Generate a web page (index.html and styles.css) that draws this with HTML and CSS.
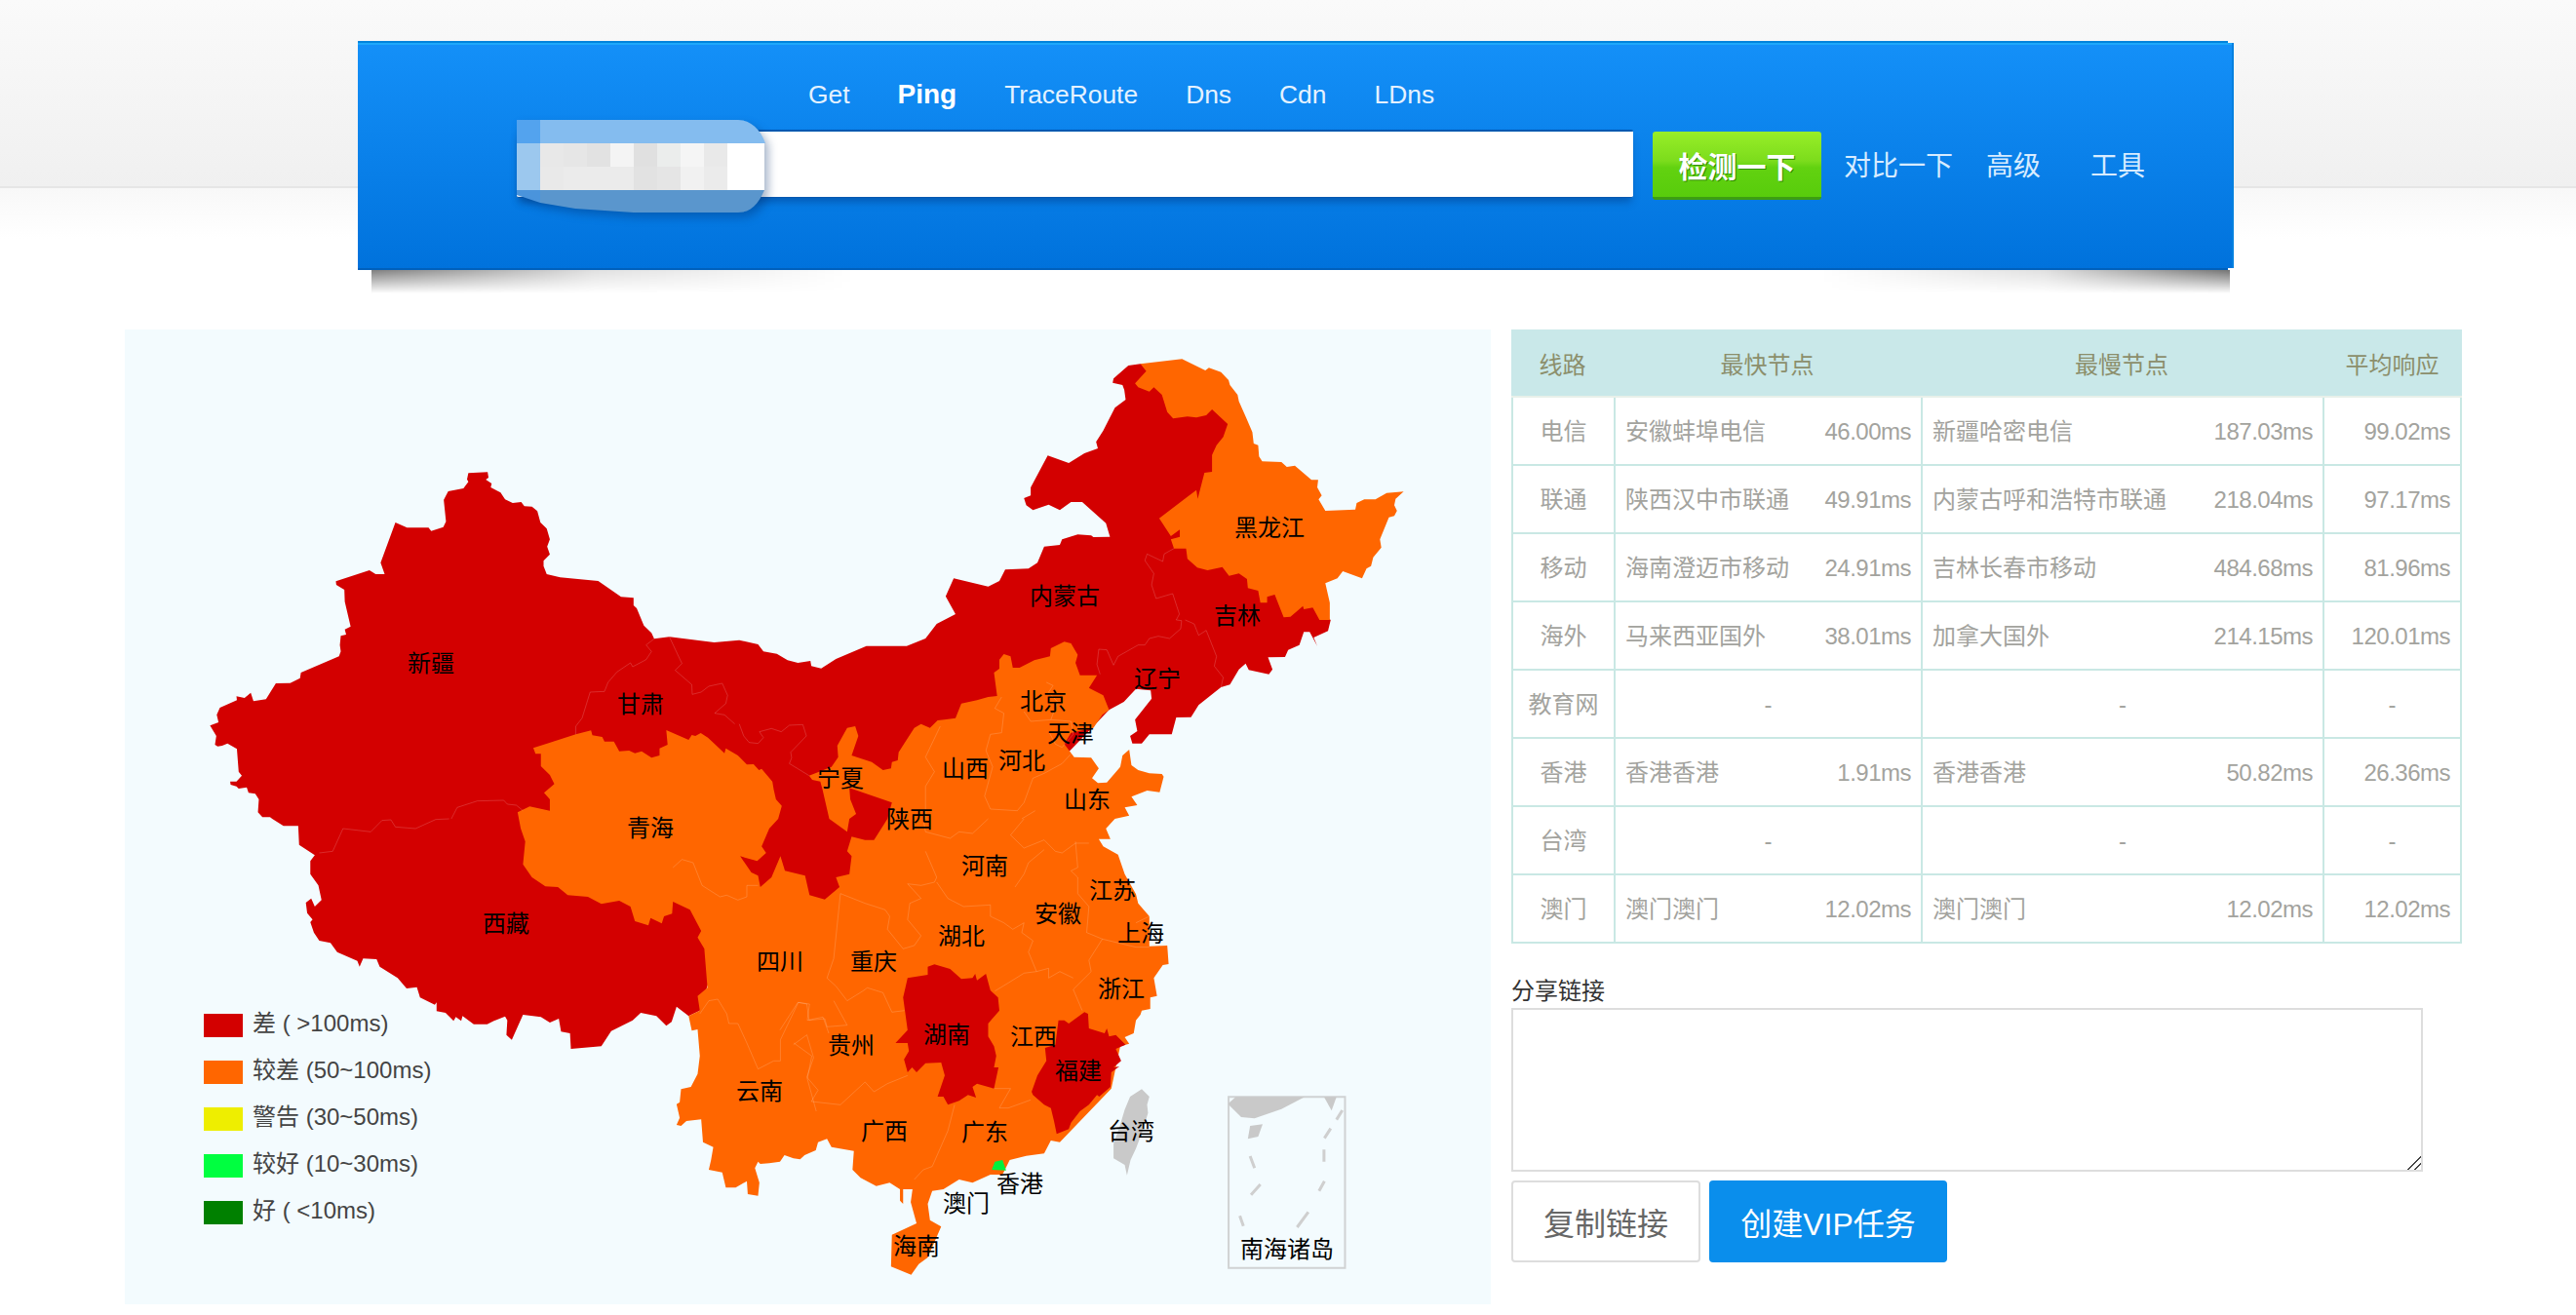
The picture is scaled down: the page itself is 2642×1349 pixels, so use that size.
FILE: index.html
```html
<!DOCTYPE html>
<html lang="zh-CN">
<head>
<meta charset="utf-8">
<title>Ping 检测</title>
<link rel="stylesheet" href="styles.css">
</head>
<body>
<div class="page">
  <header class="bar">
    <nav class="nav">
      <a>Get</a><a class="nav-on">Ping</a><a>TraceRoute</a><a>Dns</a><a>Cdn</a><a>LDns</a>
    </nav>
    <div class="search">
      <div class="field"></div>
      <svg class="patch" width="256" height="97" viewBox="530 122 256 97">
        <path fill="#84bcef" d="M554 122H757C770 122 780 132 785 146H554Z"/>
        <rect x="530" y="122" width="24" height="24" fill="#53a3ee"/>
        <rect x="530" y="146" width="24" height="48" fill="#9cc8ee"/>
        <rect x="554" y="146" width="24" height="24" fill="#e8e8e8"/>
        <rect x="578" y="146" width="24" height="24" fill="#e6e6e6"/>
        <rect x="602" y="146" width="24" height="24" fill="#e2e2e2"/>
        <rect x="626" y="146" width="24" height="24" fill="#f4f4f4"/>
        <rect x="650" y="146" width="24" height="24" fill="#e0e0e0"/>
        <rect x="674" y="146" width="24" height="24" fill="#ebedec"/>
        <rect x="698" y="146" width="24" height="24" fill="#f5f5f5"/>
        <rect x="722" y="146" width="24" height="24" fill="#e9e9e9"/>
        <rect x="554" y="170" width="24" height="24" fill="#e9e9e9"/>
        <rect x="578" y="170" width="48" height="24" fill="#ebebeb"/>
        <rect x="626" y="170" width="24" height="24" fill="#ebebeb"/>
        <rect x="650" y="170" width="24" height="24" fill="#e2e2e2"/>
        <rect x="674" y="170" width="24" height="24" fill="#e5e5e5"/>
        <rect x="698" y="170" width="24" height="24" fill="#f1f1f1"/>
        <rect x="722" y="170" width="24" height="24" fill="#ebebeb"/>
        <rect x="746" y="146" width="38" height="48" fill="#ffffff"/>
        <path fill="#4a94dc" d="M530 194H554V207L530 199Z"/>
        <path fill="#5a96cd" d="M554 194H784C778 208 770 217 757 217H650L590 213L554 207Z"/>
      </svg>
      <button class="go">检测一下</button>
      <a class="tool tool-compare">对比一下</a>
      <a class="tool tool-adv">高级</a>
      <a class="tool tool-kit">工具</a>
    </div>
  </header>

  <main class="main">
    <section class="mapbox">
      <svg class="map" width="1401" height="1000" viewBox="128 338 1401 1000">
        <g transform="translate(130 340) scale(.4592 .33333)">
          <polygon class="red" points="763,436 806,433 808,450 802,456 815,468 813,480 835,496 845,517 862,528 881,525 888,538 905,539 917,553 924,588 938,607 945,640 939,662 945,686 931,706 931,722 938,747 968,757 1053,768 1104,817 1132,820 1132,843 1139,852 1155,905 1172,928 1178,946 1212,940 1312,957 1368,950 1410,963 1422,985 1452,992 1476,1012 1499,1020 1527,1014 1529,1030 1551,1037 1584,1008 1652,968 1742,968 1784,945 1809,900 1851,870 1829,815 1847,760 1924,785 1949,768 1962,733 2014,730 2034,712 2049,662 2084,657 2089,640 2124,625 2154,628 2159,633 2196,632 2187,590 2134,525 2109,525 2084,550 2059,533 2024,550 2009,535 2004,513 2019,505 2019,480 2057,382 2104,405 2139,375 2169,360 2165,340 2181,305 2207,235 2231,210 2228,180 2224,165 2202,158 2204,145 2237,105 2264,100 2350,150 2450,230 2500,300 2520,500 2600,800 2689,888 2683,922 2651,942 2659,968 2642,925 2629,925 2619,965 2594,980 2587,1002 2549,1003 2559,1040 2551,1055 2506,1042 2499,1022 2484,1040 2464,1087 2444,1095 2394,1150 2377,1187 2344,1188 2334,1240 2284,1240 2267,1268 2246,1268 2241,1245 2257,1230 2252,1195 2289,1130 2287,1105 2254,1100 2227,1140 2194,1165 2100,1300 1800,1600 1300,2000 1280,2090 1255,2107 1228,2078 1217,2125 1205,2137 1183,2107 1148,2097 1130,2120 1082,2153 1060,2200 992,2208 990,2160 970,2155 965,2115 945,2127 925,2110 885,2103 860,2180 848,2165 850,2120 845,2108 820,2122 805,2132 775,2132 750,2107 747,2122 735,2110 730,2122 712,2097 692,2092 692,2065 688,2072 655,2050 648,2018 625,2022 605,1990 565,1955 558,1932 528,1930 520,1955 515,1937 470,1910 455,1882 430,1875 418,1850 410,1818 415,1810 403,1790 400,1758 412,1745 420,1770 435,1750 428,1705 410,1670 410,1630 420,1612 385,1580 383,1522 350,1522 325,1500 320,1495 303,1495 293,1480 295,1440 287,1423 272,1420 268,1403 250,1407 245,1400 232,1395 231,1385 245,1385 257,1367 250,1355 246,1285 225,1268 213,1275 203,1277 197,1272 200,1245 186,1213 205,1203 201,1180 208,1158 246,1135 245,1123 263,1128 277,1112 283,1138 311,1132 333,1083 365,1082 387,1067 389,1050 474,1000 478,985 476,965 478,937 490,933 487,917 500,908 487,832 486,795 468,780 467,769 542,735 556,747 576,747 567,712 600,588 626,604 674,604 680,614 707,602 713,585 708,518 718,492 752,483 763,463 760,455"/>

          <polygon class="orange" points="908,1282 1003,1240 1037,1228 1040,1243 1062,1248 1067,1262 1088,1262 1100,1292 1122,1290 1135,1298 1150,1292 1172,1312 1190,1305 1190,1283 1208,1272 1205,1227 1255,1257 1262,1242 1270,1245 1282,1236 1298,1250 1335,1298 1338,1283 1365,1305 1385,1333 1400,1332 1412,1350 1418,1346 1442,1385 1524,1385 1524,1367 1574,1340 1589,1310 1587,1275 1609,1220 1627,1215 1634,1245 1619,1305 1664,1325 1689,1350 1707,1345 1709,1325 1722,1320 1724,1295 1759,1220 1774,1208 1794,1220 1811,1197 1826,1195 1851,1190 1864,1145 1899,1135 1924,1125 1944,1122 1937,1050 1949,1038 1949,1010 1959,993 1974,1000 1979,1035 1994,1035 2027,1012 2062,1000 2064,975 2094,955 2109,960 2124,995 2119,1020 2129,1058 2167,1058 2149,1097 2181,1120 2194,1165 2179,1180 2159,1220 2109,1235 2094,1270 2116,1310 2154,1312 2171,1345 2156,1375 2169,1390 2189,1388 2219,1340 2224,1305 2239,1287 2244,1335 2259,1350 2284,1360 2312,1362 2316,1370 2307,1418 2279,1413 2244,1432 2257,1458 2229,1465 2239,1490 2207,1500 2187,1530 2197,1562 2171,1562 2181,1585 2214,1610 2229,1670 2254,1732 2259,1760 2284,1800 2284,1892 2324,1890 2327,1947 2314,1950 2294,1990 2301,2045 2286,2050 2286,2085 2267,2090 2264,2103 2254,2120 2249,2160 2229,2172 2239,2192 2219,2200 2199,2330 2084,2495 2064,2490 2049,2530 2009,2537 1972,2550 1956,2595 1929,2595 1889,2620 1859,2610 1824,2640 1799,2645 1789,2685 1794,2735 1819,2755 1789,2850 1769,2870 1752,2903 1707,2878 1709,2780 1764,2745 1751,2680 1755,2640 1734,2640 1734,2685 1727,2675 1727,2640 1704,2620 1674,2630 1639,2605 1621,2580 1624,2522 1574,2510 1564,2485 1544,2495 1539,2520 1514,2535 1504,2548 1489,2545 1469,2535 1459,2555 1435,2560 1415,2562 1410,2555 1403,2575 1413,2620 1410,2660 1387,2655 1385,2615 1360,2635 1338,2635 1330,2588 1300,2580 1305,2550 1310,2510 1287,2495 1283,2425 1250,2430 1238,2445 1228,2442 1235,2420 1228,2378 1235,2372 1238,2332 1260,2325 1275,2285 1280,2230 1275,2148 1262,2152 1255,2107 1280,2090 1275,2045 1297,2020 1290,1900 1275,1865 1283,1845 1258,1780 1220,1755 1218,1792 1200,1800 1195,1822 1170,1805 1165,1828 1135,1815 1125,1770 1100,1752 1060,1762 1030,1740 985,1735 963,1710 935,1708 905,1680 885,1640 890,1570 880,1530 873,1480 900,1462 945,1475 945,1440 932,1420 955,1393 945,1365 925,1338 925,1300 913,1300"/>

          <polygon class="red" points="1430,1340 1442,1385 1445,1410 1450,1440 1463,1460 1455,1500 1435,1530 1418,1585 1428,1605 1408,1630 1370,1615 1395,1665 1410,1675 1415,1710 1440,1680 1460,1615 1470,1660 1515,1675 1525,1735 1559,1748 1592,1710 1584,1680 1614,1670 1619,1615 1609,1600 1619,1555 1649,1565 1669,1565 1699,1500 1709,1450 1614,1405 1616,1440 1629,1485 1614,1500 1609,1540 1569,1500 1554,1410 1549,1385 1531,1380 1524,1367"/>

          <g transform="translate(1459 0)">
            <polygon class="orange" points="805,100 898,85 950,120 958,112 985,125 1002,150 1005,165 1022,195 1025,215 1040,262 1055,310 1058,345 1068,350 1070,385 1077,400 1120,402 1132,417 1150,413 1187,457 1202,457 1200,480 1210,505 1203,517 1218,552 1285,548 1288,528 1305,517 1330,517 1355,497 1393,493 1375,515 1372,535 1378,552 1372,568 1360,572 1340,640 1343,665 1325,695 1320,722 1310,730 1300,760 1257,738 1245,760 1218,775 1228,835 1228,888 1205,888 1190,850 1170,855 1168,845 1140,878 1125,880 1105,810 1088,817 1088,835 1073,835 1068,798 1045,790 1043,762 1025,745 1003,752 988,725 955,735 932,727 910,700 907,668 880,668 873,640 893,632 893,610 873,630 847,575 930,488 933,515 948,435 965,432 965,380 975,350 990,325 1000,285 965,240 952,258 930,265 910,262 878,268 865,248 853,195 835,172 825,185 800,172 793,160 818,122"/>
          </g>

          <g transform="translate(1459 1500)">
            <polygon class="red" points="345,448 380,462 405,493 430,490 436,477 440,497 460,477 470,528 487,550 490,590 465,630 465,670 478,700 483,730 478,765 488,765 478,830 465,825 440,815 430,825 438,858 420,850 400,868 375,880 365,855 352,855 368,790 360,750 325,752 305,780 295,765 285,780 277,740 288,715 285,690 258,690 285,650 275,550 285,490 330,480 330,455"/>
            <polygon class="red" points="680,595 688,600 690,645 725,660 730,645 735,670 750,665 772,695 750,708 762,745 745,765 758,762 740,780 738,825 713,855 708,850 690,880 670,900 650,935 645,955 618,970 612,930 605,890 590,880 565,850 562,840 575,790 595,745 592,705 615,695 622,620 635,620 645,630"/>
            <polygon class="grey" points="808,832 825,855 820,880 822,905 810,960 795,1015 783,1050 775,1097 770,1065 745,1045 745,1000 758,950 770,895 782,855"/>
            <polygon class="hk" points="473,1080 480,1055 497,1050 505,1082"/>

            <rect class="inset" x="1002" y="856" width="260" height="526"/>
            <polygon class="grey" points="1002,875 1018,856 1172,856 1120,893 1060,922 1030,918 1002,880"/>
            <polygon class="grey" points="1215,856 1243,856 1232,898"/>
            <polygon class="grey" points="1045,985 1050,945 1078,940 1068,978"/>
            <path class="dash" d="M1256 897L1243 926M1230 953L1216 983M1215 1018V1055M1050 1038L1060 1075M1216 1115L1204 1145M1073 1125L1052 1157M1180 1210L1155 1257M1027 1222L1035 1253"/>

            <path class="edge" d="M320 0L325 40L380 60L400 40L430 45L465 0M545 0L515 50L545 90L590 65L615 100L630 105L660 75L690 75M325 100L350 180L345 195L315 205L285 200L315 245L290 260L285 310L315 360L300 390L275 400L240 340L245 300L235 280L190 260L135 230M350 195L375 245L410 270L470 265L470 300L500 320L520 340L545 320L540 350L565 375L555 410L573 470L545 475L510 505L480 530M525 210L545 170L555 135L590 95M660 70L665 150L650 160L665 180L665 230L690 270L685 350L720 370L690 435L695 470L655 525L675 590M720 370L795 395L825 395M795 320L825 300M573 470L600 460L600 490L625 470L655 490M135 230L120 430L105 490L125 515L150 560L185 530L195 520L230 535L250 595L278 590M120 560L150 635L105 640L100 615L65 620L60 570L40 565L0 650M30 695L60 665L75 735L60 795L85 835L70 870L135 880L190 810L210 840L240 815L285 790M390 880L375 960L340 1070L320 1080L300 1110M478 830L515 830L490 890L510 890L560 865"/>
          </g>

          <g transform="translate(1459 0)">
            <path class="edge" d="M595 1080L610 1090L600 1110L620 1140L605 1195L650 1200L655 1240L630 1280L615 1270L600 1230M545 1170L560 1200L605 1195M495 1125L480 1160L500 1175L495 1235L470 1240L460 1290L475 1340L457 1430L470 1470L530 1475L545 1450L565 1375L590 1360L630 1330L650 1300M358 1215L325 1310L345 1355L325 1400L325 1500M540 1500L570 1475"/>
            <path class="edge" d="M880 668L858 685L855 708L835 695L820 685L815 705L835 745L830 780L840 822L877 807L892 870L885 888L897 890L895 915L870 945L845 938L825 945L815 965L800 965L755 1000L745 1027L730 980L712 978L708 1025L715 1055M905 888L925 900L935 935L952 920L975 1000L970 1030L990 1065L985 1095"/>
          </g>

          <path class="edge" d="M1178 946L1160 965L1172 985L1160 1010L1130 1032L1125 1020L1095 1048L1075 1080L1067 1108L1035 1110L1017 1190L1003 1215L1003 1240M1212 940L1240 1022L1225 1043L1262 1087L1263 1117L1283 1110L1300 1092L1330 1083L1342 1120L1338 1145L1313 1175L1335 1180L1358 1208M1368 1208L1378 1245L1390 1265L1410 1268L1422 1250L1413 1232L1440 1222L1462 1232L1480 1212L1510 1210L1518 1245L1483 1295L1485 1312L1480 1330L1524 1367M725 1500L738 1465L783 1445L842 1443L850 1455L870 1458L885 1475M430 1605L460 1600L483 1530L545 1540L570 1505L590 1503L600 1525L645 1530L690 1502L720 1500"/>
          <path class="edge" d="M1220 1650L1240 1625L1265 1635L1285 1705L1325 1740L1340 1735L1365 1750L1385 1740L1385 1705L1410 1705M1280 2100L1300 2060L1320 2055L1340 2100L1345 2130L1365 2130L1385 2190L1410 2270L1445 2245L1460 2245L1460 2180L1500 2065L1525 2070L1520 2120L1555 2110L1568 2160M1490 2190L1530 2230L1520 2300L1540 2400"/>
        </g>

        <text class="lbl" x="442" y="680">新疆</text>
        <text class="lbl" x="657" y="722">甘肃</text>
        <text class="lbl" x="667" y="849">青海</text>
        <text class="lbl" x="519" y="947">西藏</text>
        <text class="lbl" x="800" y="986">四川</text>
        <text class="lbl" x="779" y="1119">云南</text>
        <text class="lbl" x="1092" y="611">内蒙古</text>
        <text class="lbl" x="1302" y="541">黑龙江</text>
        <text class="lbl" x="1269" y="631">吉林</text>
        <text class="lbl" x="1187" y="696">辽宁</text>
        <text class="lbl" x="1070" y="719">北京</text>
        <text class="lbl" x="1098" y="752">天津</text>
        <text class="lbl" x="1048" y="780">河北</text>
        <text class="lbl" x="990" y="788">山西</text>
        <text class="lbl" x="862" y="798">宁夏</text>
        <text class="lbl" x="1115" y="820">山东</text>
        <text class="lbl" x="933" y="840">陕西</text>
        <text class="lbl" x="1010" y="888">河南</text>
        <text class="lbl" x="1141" y="913">江苏</text>
        <text class="lbl" x="1085" y="937">安徽</text>
        <text class="lbl" x="1170" y="957">上海</text>
        <text class="lbl" x="986" y="960">湖北</text>
        <text class="lbl" x="896" y="986">重庆</text>
        <text class="lbl" x="1150" y="1014">浙江</text>
        <text class="lbl" x="971" y="1061">湖南</text>
        <text class="lbl" x="1060" y="1063">江西</text>
        <text class="lbl" x="873" y="1072">贵州</text>
        <text class="lbl" x="1106" y="1098">福建</text>
        <text class="lbl" x="907" y="1160">广西</text>
        <text class="lbl" x="1010" y="1161">广东</text>
        <text class="lbl" x="1160" y="1160">台湾</text>
        <text class="lbl" x="1046" y="1214">香港</text>
        <text class="lbl" x="991" y="1234">澳门</text>
        <text class="lbl" x="940" y="1278">海南</text>
        <text class="lbl" x="1320" y="1281">南海诸岛</text>
      </svg>
      <ul class="legend">
        <li><i class="sw sw-bad"></i>差 ( &gt;100ms)</li>
        <li><i class="sw sw-poor"></i>较差 (50~100ms)</li>
        <li><i class="sw sw-warn"></i>警告 (30~50ms)</li>
        <li><i class="sw sw-fine"></i>较好 (10~30ms)</li>
        <li><i class="sw sw-good"></i>好 ( &lt;10ms)</li>
      </ul>
    </section>

    <section class="side">
      <table class="stats">
        <colgroup><col class="c1"><col class="c2"><col class="c3"><col class="c4"></colgroup>
        <thead>
          <tr><th>线路</th><th>最快节点</th><th>最慢节点</th><th>平均响应</th></tr>
        </thead>
        <tbody>
          <tr><td class="line">电信</td><td><div class="node"><span>安徽蚌埠电信</span><span class="num">46.00ms</span></div></td><td><div class="node"><span>新疆哈密电信</span><span class="num">187.03ms</span></div></td><td class="avg"><span class="num">99.02ms</span></td></tr>
          <tr><td class="line">联通</td><td><div class="node"><span>陕西汉中市联通</span><span class="num">49.91ms</span></div></td><td><div class="node"><span>内蒙古呼和浩特市联通</span><span class="num">218.04ms</span></div></td><td class="avg"><span class="num">97.17ms</span></td></tr>
          <tr><td class="line">移动</td><td><div class="node"><span>海南澄迈市移动</span><span class="num">24.91ms</span></div></td><td><div class="node"><span>吉林长春市移动</span><span class="num">484.68ms</span></div></td><td class="avg"><span class="num">81.96ms</span></td></tr>
          <tr><td class="line">海外</td><td><div class="node"><span>马来西亚国外</span><span class="num">38.01ms</span></div></td><td><div class="node"><span>加拿大国外</span><span class="num">214.15ms</span></div></td><td class="avg"><span class="num">120.01ms</span></td></tr>
          <tr><td class="line">教育网</td><td class="none">-</td><td class="none">-</td><td class="none">-</td></tr>
          <tr><td class="line">香港</td><td><div class="node"><span>香港香港</span><span class="num">1.91ms</span></div></td><td><div class="node"><span>香港香港</span><span class="num">50.82ms</span></div></td><td class="avg"><span class="num">26.36ms</span></td></tr>
          <tr><td class="line">台湾</td><td class="none">-</td><td class="none">-</td><td class="none">-</td></tr>
          <tr><td class="line">澳门</td><td><div class="node"><span>澳门澳门</span><span class="num">12.02ms</span></div></td><td><div class="node"><span>澳门澳门</span><span class="num">12.02ms</span></div></td><td class="avg"><span class="num">12.02ms</span></td></tr>
        </tbody>
      </table>
      <label class="share-label" for="share">分享链接</label>
      <textarea class="share" id="share"></textarea>
      <div class="actions">
        <button class="btn btn-copy">复制链接</button>
        <button class="btn btn-vip">创建VIP任务</button>
      </div>
    </section>
  </main>
</div>
</body>
</html>
```

FILE: styles.css
```css
* { box-sizing: border-box; }
html, body { margin: 0; padding: 0; height: 100%; overflow: hidden; background: #fff; }
body { font-family: "Liberation Sans", "Noto Sans CJK SC", sans-serif; font-size: 24px; color: #333; }

.page {
  height: 1349px;
  padding-top: 42px;
  background: linear-gradient(#fafafa 0, #f0f0f0 191px, #e6e6e6 191px, #e6e6e6 193px, #f8f8f8 193px, #fff 245px);
}

/* top bar */
.bar {
  position: relative;
  margin-left: 367px;
  width: 1924px;
  height: 235px;
  background: linear-gradient(#1490f8, #0072dc);
  border-top: 2px solid #0084dc;
  border-bottom: 2px solid #0060bc;
  border-right: 2px solid #0480e0;
  box-shadow: inset 0 2px 0 #1ea8fb;
}
.bar::before {
  content: "";
  position: absolute;
  left: 14px;
  right: 2px;
  top: 100%;
  height: 24px;
  margin-top: 2px;
  background: linear-gradient(to right, rgba(0,0,0,.5), rgba(0,0,0,.12) 12%, transparent 26%, transparent 78%, rgba(0,0,0,.12) 90%, rgba(0,0,0,.55));
  -webkit-mask-image: linear-gradient(#000, transparent);
  mask-image: linear-gradient(#000, transparent);
}
/* the top and bottom rims stop short of the right edge */
.bar::after {
  content: "";
  position: absolute;
  top: -2px;
  right: -2px;
  width: 6px;
  height: 2px;
  background: #f8f8f8;
  box-shadow: 0 233px 0 #fff;
}
.nav { display: flex; align-items: center; height: 38px; margin-top: 34px; padding-left: 462px; gap: 49px; }
.nav a { font-size: 26.4px; line-height: 38px; color: #e4f2ff; }
.nav .nav-on { font-size: 28px; font-weight: 700; color: #fff; }

.search { position: relative; display: flex; align-items: flex-start; margin-top: 17px; padding-left: 163px; }
.field {
  width: 1145px;
  height: 70px;
  background: #fff;
  border-top: 2px solid #0058b0;
  border-bottom: 1px solid #0058b0;
  border-radius: 2px;
  box-shadow: 0 6px 8px -2px rgba(0,50,120,.45);
}
.patch { position: absolute; left: 163px; top: -10px; filter: drop-shadow(4px 5px 5px rgba(0,40,100,.35)); }
.go {
  width: 173px;
  height: 70px;
  margin: 2px 0 0 20px;
  padding: 0;
  border: 0;
  border-bottom: 3px solid #3c9e12;
  border-radius: 3px;
  background: linear-gradient(#98ee28, #7cdc1c 45%, #62d210 55%, #58cc0c);
  color: #fff;
  font: 700 30px "Liberation Sans", "Noto Sans CJK SC", sans-serif;
  text-shadow: 1px 1px 0 #2f8a00;
}
.tool { font-size: 28px; line-height: 40px; color: #d8ecff; margin-top: 18px; }
.tool-compare { margin-left: 23px; }
.tool-adv { margin-left: 34px; }
.tool-kit { margin-left: 51px; }

/* layout */
.main { display: flex; align-items: flex-start; margin-top: 61px; padding-left: 128px; }

/* map */
.mapbox { position: relative; width: 1401px; height: 1000px; background: #f3fbfe; }
.map { display: block; }
.red { fill: #d30000; }
.orange { fill: #ff6600; }
.grey { fill: #c9c9c9; }
.hk { fill: #00f03c; }
.inset { fill: none; stroke: #d0d2d3; stroke-width: 2; vector-effect: non-scaling-stroke; }
.dash { fill: none; stroke: #cfcfcf; stroke-width: 3; vector-effect: non-scaling-stroke; }
.edge { fill: none; stroke: rgba(255,255,255,.17); stroke-width: 1; vector-effect: non-scaling-stroke; }
.lbl { font-size: 24px; fill: #000; text-anchor: middle; dominant-baseline: central; }

.legend { position: absolute; left: 81px; top: 690px; margin: 0; padding: 0; list-style: none; color: #444; }
.legend li { display: flex; align-items: center; height: 48px; padding-bottom: 10px; white-space: pre; }
.sw { display: block; width: 40px; height: 24px; margin: 10px 10px 0 0; }
.sw-bad { background: #d30000; }
.sw-poor { background: #ff6600; }
.sw-warn { background: #eeee00; }
.sw-fine { background: #00ff40; }
.sw-good { background: #008000; }

/* right column */
.side { width: 975px; margin-left: 21px; }
.stats { width: 975px; table-layout: fixed; border-collapse: separate; border-spacing: 0; color: #a3a39e; }
.c1 { width: 105px; }
.c2 { width: 315px; }
.c3 { width: 412px; }
.c4 { width: 143px; }
.stats th { height: 70px; padding: 0; font-weight: 400; color: #8c8f6c; background: #c9e8e9; border-bottom: 2px solid #e8f0ea; }
.stats td { height: 70px; padding: 2px 10px 0; line-height: 34px; border-bottom: 2px solid #c9e8e4; border-left: 2px solid #c9e8e4; }
.stats td:last-child { border-right: 2px solid #c9e8e4; }
.stats .line { padding: 2px 0 0; text-align: center; }
.node { display: flex; justify-content: space-between; align-items: center; height: 34px; }
.node span { display: block; line-height: 34px; }
.num { letter-spacing: -.5px; }
.avg { text-align: right; }
.none { text-align: center; }

.share-label { display: block; margin-top: 32px; line-height: 34px; color: #333; }
.share { display: block; width: 935px; height: 168px; border: 2px solid #ddd; background: #fff; outline: 0; }
.share::-webkit-resizer {
  background: linear-gradient(135deg, transparent 52%, #444 52%, #444 58%, transparent 58%, transparent 74%, #444 74%, #444 80%, transparent 80%);
}
.actions { display: flex; gap: 9px; margin-top: 9px; }
.btn { height: 84px; padding: 0; border-radius: 4px; font: 32px "Liberation Sans", "Noto Sans CJK SC", sans-serif; }
.btn-copy { width: 194px; background: #fff; border: 2px solid #ddd; color: #666; }
.btn-vip { width: 244px; background: #0a8eec; border: 0; color: #fff; }
```
